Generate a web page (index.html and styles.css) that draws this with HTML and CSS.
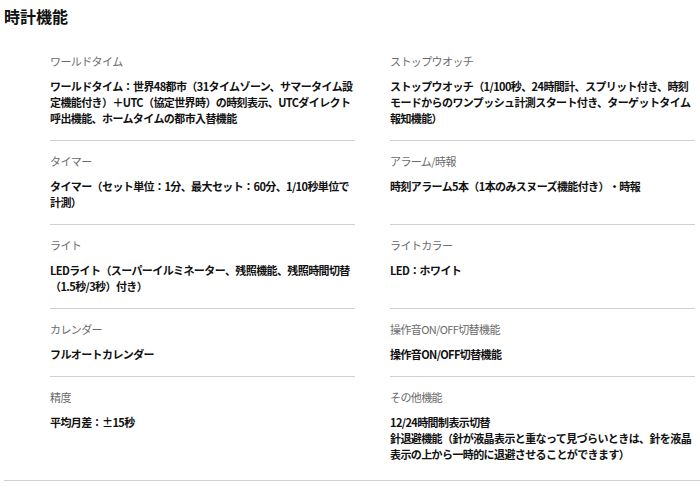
FILE: index.html
```html
<!DOCTYPE html>
<html lang="ja">
<head>
<meta charset="utf-8">
<title>時計機能</title>
<link rel="stylesheet" href="styles.css">
</head>
<body>
<section class="spec">
  <h2 class="spec-title">時計機能</h2>
  <div class="spec-grid">
    <div class="spec-item">
      <div class="spec-label">ワールドタイム</div>
      <div class="spec-value">ワールドタイム：世界48都市（31タイムゾーン、サマータイム設定機能付き）＋UTC（協定世界時）の時刻表示、UTCダイレクト呼出機能、ホームタイムの都市入替機能</div>
    </div>
    <div class="spec-item">
      <div class="spec-label">ストップウオッチ</div>
      <div class="spec-value">ストップウオッチ（1/100秒、24時間計、スプリット付き、時刻モードからのワンプッシュ計測スタート付き、ターゲットタイム報知機能）</div>
    </div>
    <div class="spec-item">
      <div class="spec-label">タイマー</div>
      <div class="spec-value">タイマー（セット単位：1分、最大セット：60分、1/10秒単位で計測）</div>
    </div>
    <div class="spec-item">
      <div class="spec-label">アラーム/時報</div>
      <div class="spec-value">時刻アラーム5本（1本のみスヌーズ機能付き）・時報</div>
    </div>
    <div class="spec-item">
      <div class="spec-label">ライト</div>
      <div class="spec-value">LEDライト（スーパーイルミネーター、残照機能、残照時間切替（1.5秒/3秒）付き）</div>
    </div>
    <div class="spec-item">
      <div class="spec-label">ライトカラー</div>
      <div class="spec-value">LED：ホワイト</div>
    </div>
    <div class="spec-item">
      <div class="spec-label">カレンダー</div>
      <div class="spec-value">フルオートカレンダー</div>
    </div>
    <div class="spec-item">
      <div class="spec-label">操作音ON/OFF切替機能</div>
      <div class="spec-value">操作音ON/OFF切替機能</div>
    </div>
    <div class="spec-item">
      <div class="spec-label">精度</div>
      <div class="spec-value">平均月差：±15秒</div>
    </div>
    <div class="spec-item">
      <div class="spec-label">その他機能</div>
      <div class="spec-value">12/24時間制表示切替<br>針退避機能（針が液晶表示と重なって見づらいときは、針を液晶表示の上から一時的に退避させることができます）</div>
    </div>
  </div>
</section>
</body>
</html>
```
FILE: styles.css
```css
html, body {
  margin: 0;
  padding: 0;
  background: #ffffff;
}

body {
  font-family: "Noto Sans CJK JP", "Noto Sans", sans-serif;
  color: #111111;
  text-spacing-trim: space-all;
}

.spec {
  margin-left: 4px;
  border-bottom: 1px solid #d0d0d0;
}

.spec-title {
  margin: 0;
  padding-top: 4px;
  font-size: 16px;
  line-height: 24px;
  font-weight: 700;
  color: #111111;
}

.spec-grid {
  display: grid;
  grid-template-columns: 305px 305px;
  column-gap: 35px;
  padding: 13px 0 4px 46px;
}

.spec-item {
  padding: 12px 0 14px;
  border-bottom: 1px solid #d0d0d0;
}

.spec-item:nth-last-child(-n+2) {
  border-bottom: none;
}

.spec-label {
  font-size: 11px;
  line-height: 16px;
  letter-spacing: -0.6px;
  color: #6b6b6b;
  margin-bottom: 9px;
}

.spec-value {
  font-size: 11px;
  line-height: 16px;
  letter-spacing: -0.6px;
  font-weight: 700;
  color: #111111;
}
```
